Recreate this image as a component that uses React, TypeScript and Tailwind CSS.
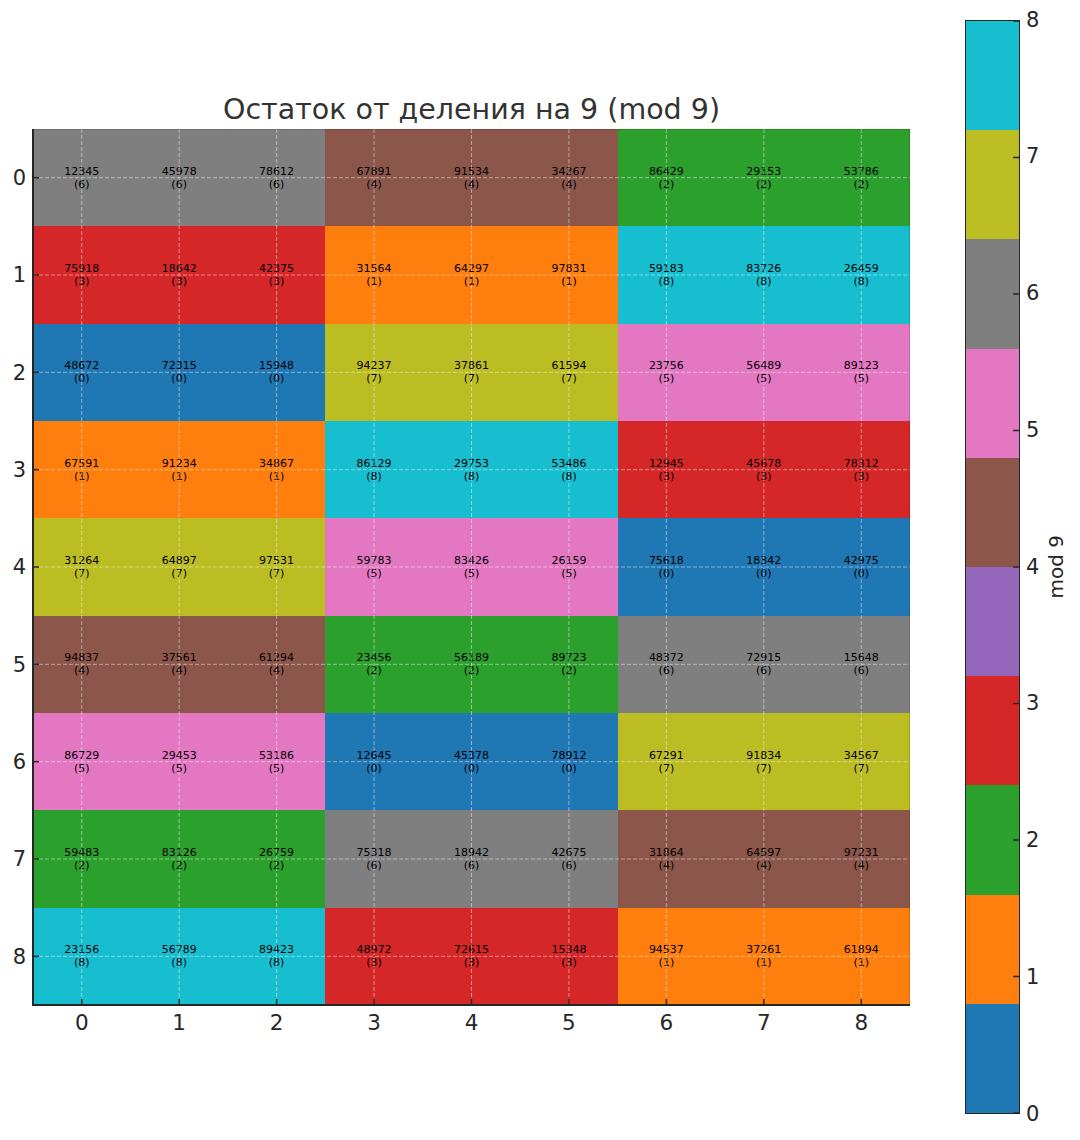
import React from 'react';

// remainder grid: [number, number % 9]
const rows: number[][] = [
    [12345, 45978, 78612, 67891, 91534, 34267, 86429, 29153, 53786],
    [75918, 18642, 42375, 31564, 64297, 97831, 59183, 83726, 26459],
    [48672, 72315, 15948, 94237, 37861, 61594, 23756, 56489, 89123],
    [67591, 91234, 34867, 86129, 29753, 53486, 12945, 45678, 78312],
    [31264, 64897, 97531, 59783, 83426, 26159, 75618, 18342, 42975],
    [94837, 37561, 61294, 23456, 56189, 89723, 48372, 72915, 15648],
    [86729, 29453, 53186, 12645, 45378, 78912, 67291, 91834, 34567],
    [59483, 83126, 26759, 75318, 18942, 42675, 31864, 64597, 97231],
    [23156, 56789, 89423, 48972, 72615, 15348, 94537, 37261, 61894],
];

// tab10 sampled for vmin=0, vmax=8
const cellColor: Record<number, string> = {
    0: 'bg-[#1f77b4]',
    1: 'bg-[#ff7f0e]',
    2: 'bg-[#2ca02c]',
    3: 'bg-[#d62728]',
    4: 'bg-[#8c564b]',
    5: 'bg-[#e377c2]',
    6: 'bg-[#7f7f7f]',
    7: 'bg-[#bcbd22]',
    8: 'bg-[#17becf]',
};

// colorbar, top to bottom
const barColors = [
    'bg-[#17becf]',
    'bg-[#bcbd22]',
    'bg-[#7f7f7f]',
    'bg-[#e377c2]',
    'bg-[#8c564b]',
    'bg-[#9467bd]',
    'bg-[#d62728]',
    'bg-[#2ca02c]',
    'bg-[#ff7f0e]',
    'bg-[#1f77b4]',
];

const idx = [0, 1, 2, 3, 4, 5, 6, 7, 8];
const W = 877;
const H = 876;

const AxesOverlay = () => (
    <svg
        className="absolute inset-0 pointer-events-none overflow-visible"
        width={W}
        height={H}
        viewBox={`0 0 ${W} ${H}`}
    >
        {idx.map(i => (
            <line
                key={`v${i}`}
                x1={((i + 0.5) * W) / 9}
                x2={((i + 0.5) * W) / 9}
                y1={0}
                y2={H}
                stroke="rgba(255,255,255,0.45)"
                strokeWidth={1}
                strokeDasharray="4 2"
            />
        ))}
        {idx.map(j => (
            <line
                key={`h${j}`}
                x1={0}
                x2={W}
                y1={((j + 0.5) * H) / 9}
                y2={((j + 0.5) * H) / 9}
                stroke="rgba(255,255,255,0.45)"
                strokeWidth={1}
                strokeDasharray="4 2"
            />
        ))}
        {/* light top/right frame */}
        <line x1={0} x2={W} y1={0.5} y2={0.5} stroke="rgba(0,0,0,0.15)" strokeWidth={1} />
        <line x1={W - 0.5} x2={W - 0.5} y1={0} y2={H} stroke="rgba(0,0,0,0.15)" strokeWidth={1} />
        {/* spines */}
        <line x1={0} x2={0} y1={0} y2={H + 1} stroke="#262626" strokeWidth={2} />
        <line x1={-1} x2={W} y1={H} y2={H} stroke="#262626" strokeWidth={2} />
        {/* ticks */}
        {idx.map(i => (
            <line
                key={`tx${i}`}
                x1={((i + 0.5) * W) / 9}
                x2={((i + 0.5) * W) / 9}
                y1={H}
                y2={H - 6}
                stroke="#262626"
                strokeWidth={1.5}
            />
        ))}
        {idx.map(j => (
            <line
                key={`ty${j}`}
                x1={0}
                x2={6}
                y1={((j + 0.5) * H) / 9}
                y2={((j + 0.5) * H) / 9}
                stroke="#262626"
                strokeWidth={1.5}
            />
        ))}
    </svg>
);

const Heatmap = () => (
    <div className="flex flex-col">
        {/* Title */}
        <div className="h-[129px] flex items-end">
            <div className="w-[33px]" />
            <div className="w-[877px] pb-[2px] text-center text-[28.5px] leading-[34px] text-[#333333]">
                Остаток от деления на 9 (mod 9)
            </div>
        </div>

        <div className="flex">
            {/* y tick labels */}
            <div className="w-[33px] h-[876px] grid grid-rows-9">
                {idx.map(j => (
                    <div key={j} className="flex items-center justify-end pr-[7px] pt-[2px] text-[21px] leading-none text-[#262626]">
                        {j}
                    </div>
                ))}
            </div>

            {/* Cells */}
            <div className="relative w-[877px] h-[876px]">
                <div className="grid grid-cols-9 grid-rows-9 w-full h-full">
                    {rows.map((row, j) =>
                        row.map((n, i) => (
                            <div
                                key={`${j}-${i}`}
                                className={`${cellColor[n % 9]} flex flex-col items-center justify-center text-[11px] leading-[13px] text-black`}
                            >
                                <span>{n}</span>
                                <span>({n % 9})</span>
                            </div>
                        ))
                    )}
                </div>
                <AxesOverlay />
            </div>
        </div>

        {/* x tick labels */}
        <div className="flex mt-[6px]">
            <div className="w-[33px]" />
            <div className="w-[877px] grid grid-cols-9">
                {idx.map(i => (
                    <div key={i} className="text-center text-[21.5px] leading-[24px] text-[#262626]">
                        {i}
                    </div>
                ))}
            </div>
        </div>
    </div>
);

const ColorBar = () => (
    <div className="flex pt-[20px] ml-[55px]">
        <div className="relative w-[55px] h-[1094px] flex flex-col border-[1.5px] border-[#262626]">
            {barColors.map(c => (
                <div key={c} className={`${c} flex-1`} />
            ))}
            <svg className="absolute inset-0 pointer-events-none overflow-visible" width="100%" height="100%">
                {idx.map(v => (
                    <line
                        key={v}
                        x1="100%"
                        x2="89%"
                        y1={`${(v / 8) * 100}%`}
                        y2={`${(v / 8) * 100}%`}
                        stroke="#262626"
                        strokeWidth={1.5}
                    />
                ))}
            </svg>
        </div>

        {/* tick labels 8..0 */}
        <div className="w-[26px] h-[1094px] pl-[6px] flex flex-col justify-between">
            {[8, 7, 6, 5, 4, 3, 2, 1, 0].map(v => (
                <div key={v} className="h-0 flex items-center text-[21px] leading-none text-[#262626]">
                    {v}
                </div>
            ))}
        </div>

        <div className="h-[1094px] flex items-center">
            <div className="[writing-mode:vertical-rl] rotate-180 text-[20px] leading-[20px] text-[#262626]">
                mod 9
            </div>
        </div>
    </div>
);

export default function App() {
    return (
        <div className="w-[1080px] h-[1140px] bg-white flex font-['DejaVu_Sans',sans-serif] overflow-hidden">
            <Heatmap />
            <ColorBar />
        </div>
    );
}
